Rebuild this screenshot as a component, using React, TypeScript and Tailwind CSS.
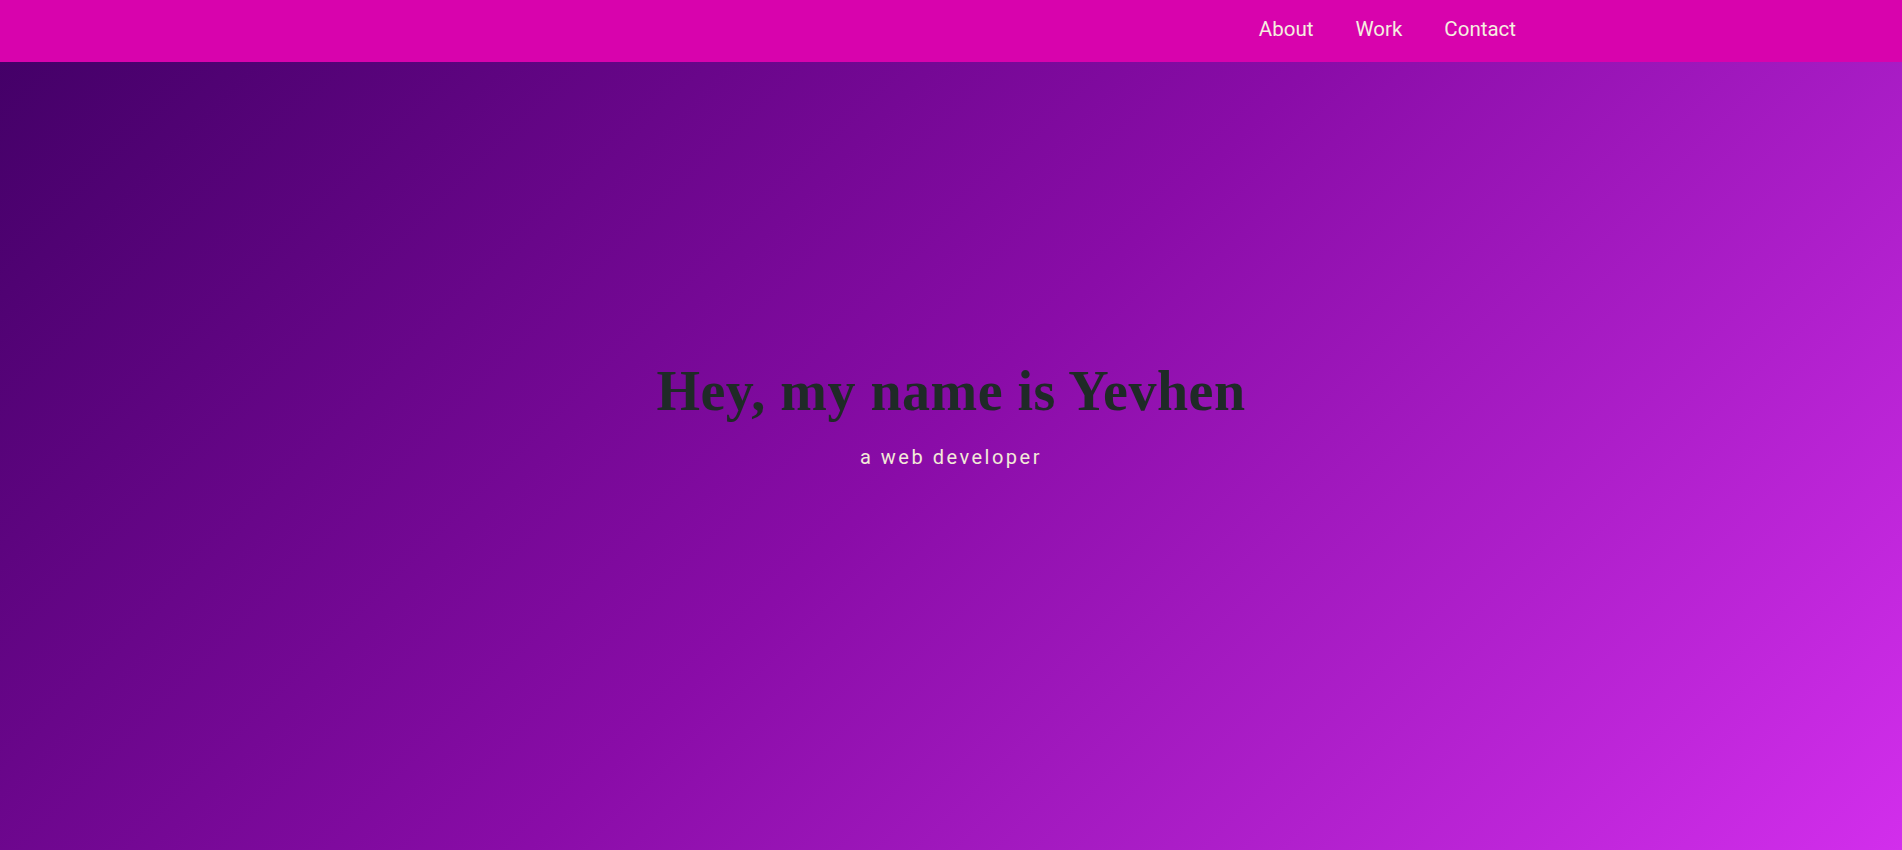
import React from 'react';

const links = ['About', 'Work', 'Contact'];

const App: React.FC = () => {
  return (
    <div className="relative min-h-screen" style={{ fontFamily: 'Roboto, "Liberation Sans", sans-serif' }}>
      <nav className="fixed top-0 left-0 right-0 z-10 h-[62px] bg-[#d803ad] flex items-center justify-end pr-[386px]">
        <ul className="flex items-center gap-[42px] -mt-[3px]">
          {links.map((l) => (
            <li key={l}>
              <a href="#" className="text-[20.5px] text-[#f5efe0] no-underline">
                {l}
              </a>
            </li>
          ))}
        </ul>
      </nav>

      <section className="h-screen w-full bg-linear-135 from-[#410065] via-[#8a0ca8] to-[#d22eec] flex flex-col items-center justify-center">
        <h1
          className="text-[56px] leading-none font-bold text-[#1f2a27] tracking-[0.5px] -mt-[16px]"
          style={{ fontFamily: '"Liberation Serif", "DejaVu Serif", serif' }}
        >
          Hey, my name is Yevhen
        </h1>
        <p className="mt-[23px] text-[20px] text-[#f3ead8] tracking-[2.5px] font-normal">a web developer</p>
      </section>
    </div>
  );
};

export default App;
